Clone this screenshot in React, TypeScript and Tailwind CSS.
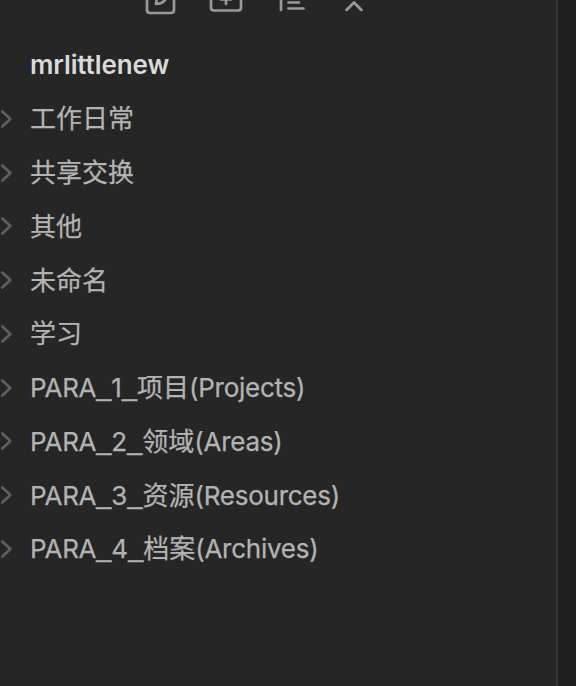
const folders = [
  ['工作日常'],
  ['共享交换'],
  ['其他'],
  ['未命名'],
  ['学习'],
  ['PARA', '1', '项目', '(Projects)'],
  ['PARA', '2', '领域', '(Areas)'],
  ['PARA', '3', '资源', '(Resources)'],
  ['PARA', '4', '档案', '(Archives)'],
];

function Underscore() {
  return <span className="align-[2px] font-['Liberation_Sans',sans-serif] text-[27px] leading-none">_</span>;
}

function FolderName({ parts }: { parts: string[] }) {
  if (parts.length === 1) return <span>{parts[0]}</span>;
  return (
    <span>
      <span className="tracking-[-0.25px]">{parts[0]}</span>
      <Underscore />
      {parts[1]}
      <Underscore />
      {parts[2]}
      <span className="tracking-[-0.25px]">{parts[3]}</span>
    </span>
  );
}

export default function App() {
  return (
    <div className="flex h-[686px] w-full overflow-hidden bg-[#262626] font-['Inter','Noto_Sans_CJK_SC',sans-serif] text-[26px] text-[#b3b3b3]">
      <aside className="flex-1">
        <svg width="400" height="38" viewBox="0 0 400 38" fill="none" stroke="#999" strokeWidth="2.7" strokeLinecap="round" strokeLinejoin="round">
          <path d="M147 -5V10Q147 13 150 13H171Q174 13 174 10V-5M157 -3L156 4Q162 4 165 0L168 -4" />
          <path d="M211 -5V7.500Q211 10.500 214 10.500H238Q241 10.500 241 7.500V-5M226 -5V4M221 -0.500H231" />
          <path d="M281 -5V10M288.500 2.500H299M288.500 8.500H303.500" />
          <path d="M346.500 10L354 2.500L361.500 10" />
        </svg>
        <h1 className="flex h-[53px] items-center pl-[30px] font-semibold tracking-[-0.1px] text-[#dadada]">mrlittlenew</h1>
        <div className="pt-px">
          {folders.map((parts) => (
            <div key={parts.join('_')} className="flex h-[53.75px] items-center">
              <svg className="mr-[16px] shrink-0" width="14" height="24" viewBox="0 0 14 24" fill="none" stroke="#5f5f5f" strokeWidth="2.8" strokeLinecap="round" strokeLinejoin="round">
                <path d="M2.300 4.500L10.300 12L2.300 19.500" />
              </svg>
              <span className="whitespace-nowrap [-webkit-text-stroke:0.25px_currentColor]">
                <FolderName parts={parts} />
              </span>
            </div>
          ))}
        </div>
      </aside>
      <div className="w-[2px] bg-[#363636]" />
      <div className="w-[18px] bg-[#1e1e1e]" />
    </div>
  );
}
